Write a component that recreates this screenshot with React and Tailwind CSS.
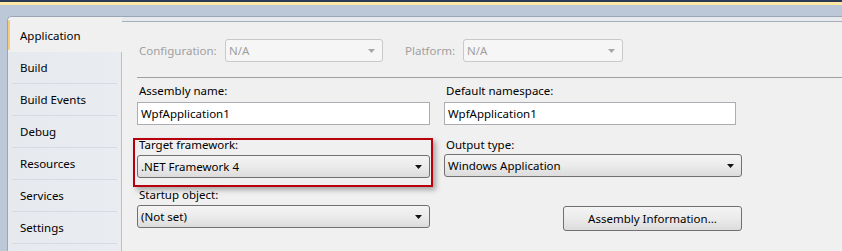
const Arrow = ({ disabled }) => (
  <svg width="7" height="4" viewBox="0 0 7 4" className="shrink-0">
    <path d="M0 0h7L3.5 4z" fill={disabled ? '#a6a6a6' : '#111'} />
  </svg>
);

const Combo = ({ value, width, disabled }) => (
  <div
    className={
      disabled
        ? 'flex h-[23px] items-center justify-between rounded-[3px] border border-[#c9c9c9] bg-[#f6f6f6] pl-[3px] pr-[7px] text-[#a0a0a0]'
        : 'flex h-[23px] items-center justify-between rounded-[3px] border border-[#707070] bg-gradient-to-b from-[#f4f4f4] via-[#ebebeb] to-[#dcdcdc] pl-[3px] pr-[7px] text-black'
    }
    style={{ width }}
  >
    <span>{value}</span>
    <Arrow disabled={disabled} />
  </div>
);

const TextBox = ({ value, width }) => (
  <div
    className="flex h-[23px] items-center border border-[#abadb3] bg-white pl-[3px] text-black"
    style={{ width }}
  >
    {value}
  </div>
);

const Label = ({ children }) => <div className="h-[16px] pl-[2px] leading-[16px] text-black">{children}</div>;

const tabs = ['Build', 'Build Events', 'Debug', 'Resources', 'Services', 'Settings', ''];

export default function App() {
  return (
    <div
      className="flex h-[251px] w-[842px] flex-col overflow-hidden bg-[#bcc7d8] text-[11.5px]"
      style={{ fontFamily: '"Noto Sans", "Open Sans", sans-serif' }}
    >
      <div className="h-[2px] shrink-0 bg-[#293955]" />
      <div className="h-[3px] shrink-0 bg-[#fde8a4]" />
      <div className="h-[11px] shrink-0" />
      <div className="ml-[7px] flex flex-1 overflow-hidden rounded-tl-[5px] border-l border-t border-[#9aa5b6] bg-[#e8ebf0]">
        {/* tab list */}
        <div className="flex w-[114px] shrink-0 flex-col overflow-hidden">
          <div className="relative flex h-[35px] shrink-0 items-center bg-[#f0f0f0] pl-[12px] pt-[2px] text-black">
            <div className="absolute left-0 top-[3px] h-[30px] w-[2px] rounded-full bg-[#f3cf7a]" />
            Application
          </div>
          <div className="flex flex-1 flex-col border-r border-[#b9c0cb] bg-gradient-to-r from-[#e6e9ee] to-[#e9ecf0]">
            {tabs.map((t, i) => (
              <div key={i} className="flex h-[32px] shrink-0 flex-col">
                <div className="flex flex-1 items-center pl-[12px] text-black">{t}</div>
                <div className="mx-[4px] h-px bg-[#d6dae1]" />
              </div>
            ))}
          </div>
        </div>

        {/* content */}
        <div className="flex flex-1 flex-col">
          <div className="h-[4px] bg-[#e6e9ee]" />
          <div className="h-px bg-[#a7afba]" />
          <div className="flex flex-1 flex-col bg-[#f0f0f0] pl-[15px] pt-[17px]">
            <div className="flex items-center">
              <span className="w-[88px] pl-[2px] text-[#a0a0a0]">Configuration:</span>
              <Combo value="N/A" width={158} disabled />
              <span className="ml-[22px] w-[58px] text-[#a0a0a0]">Platform:</span>
              <Combo value="N/A" width={160} disabled />
            </div>

            <div className="mt-[15px] h-px bg-[#a0a0a0]" />

            <div className="mt-[5px] flex gap-[14px]">
              <div className="flex flex-col gap-[3px]">
                <Label>Assembly name:</Label>
                <TextBox value="WpfApplication1" width={293} />
              </div>
              <div className="flex flex-col gap-[3px]">
                <Label>Default namespace:</Label>
                <TextBox value="WpfApplication1" width={292} />
              </div>
            </div>

            <div className="mt-[12px] flex gap-[14px]">
              <div className="relative flex flex-col gap-[2px]">
                <div className="absolute left-[-4px] top-[1px] h-[49px] w-[300px] border-2 border-[#b8000c] shadow-[3px_3px_5px_rgba(0,0,0,0.3)]" />
                <Label>Target framework:</Label>
                <Combo value=".NET Framework 4" width={293} />
              </div>
              <div className="flex flex-col gap-[1px]">
                <Label>Output type:</Label>
                <Combo value="Windows Application" width={298} />
              </div>
            </div>

            <div className="mt-[9px] flex items-end">
              <div className="flex flex-col gap-[2px]">
                <Label>Startup object:</Label>
                <Combo value="(Not set)" width={293} />
              </div>
              <button className="mb-[-3px] ml-[133px] h-[25px] w-[179px] rounded-[3px] border border-[#707070] bg-gradient-to-b from-[#f4f4f4] via-[#ebebeb] to-[#dcdcdc] text-center text-black">
                Assembly Information...
              </button>
            </div>
          </div>
        </div>
      </div>
    </div>
  );
}
